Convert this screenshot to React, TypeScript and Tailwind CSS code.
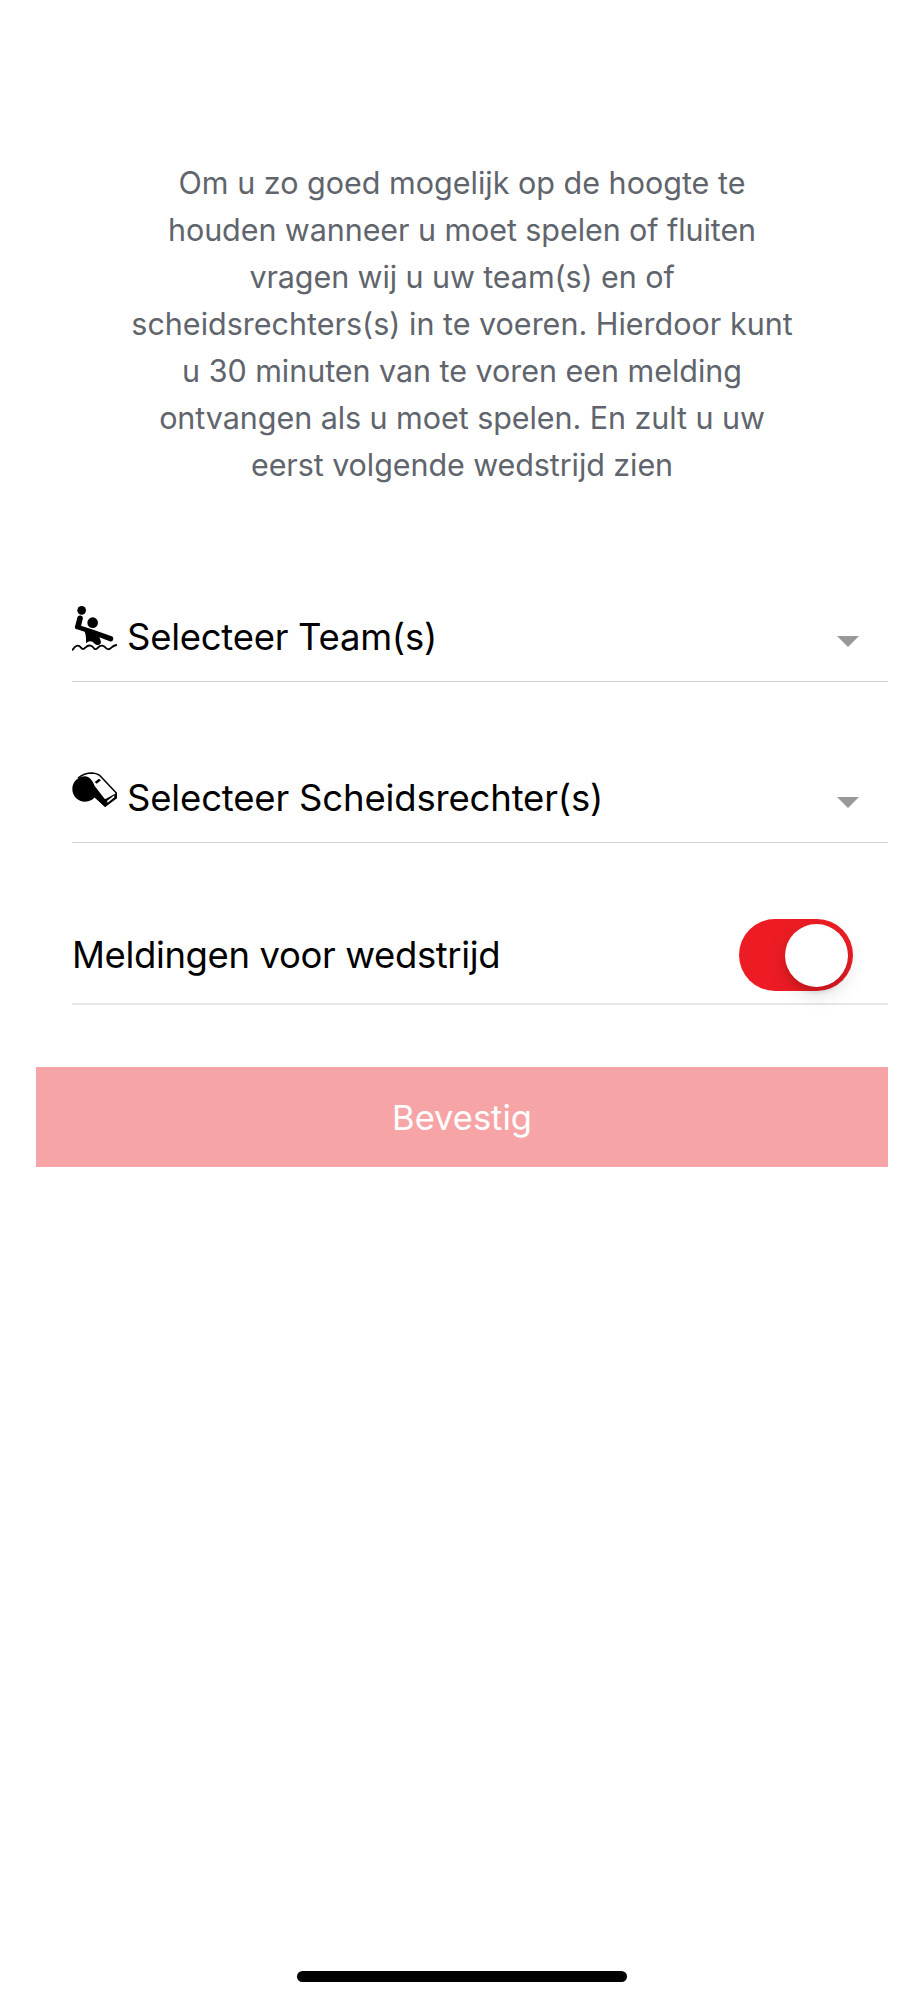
import { useState } from 'react'
import type { ReactNode } from 'react'

// ── Icons ─────────────────────────────────────────────────────────────────────

function WaterPoloIcon() {
  return (
    <svg viewBox="0 0 135 135" className="h-[45px] w-[45px]" fill="black">
      <circle cx="29" cy="13" r="13" />
      <circle cx="62" cy="50" r="16" />
      <path d="M24 37 18 61" stroke="black" strokeWidth="17" strokeLinecap="round" />
      <path d="M9 59 Q7 68 15 70 L38 77 Q43 88 42 112 Q48 106 55 106 Q62 106 68 113 Q74 119 82 116 Q89 112 86 104 Q84 98 82 94 L113 106 Q120 108 123 102 Q126 94 119 91 L64 71 L27 59Z" />
      <path
        d="M2 131 Q9 120 16 119 Q22 118 27 125 Q33 133 40 125 Q48 117 56 119 Q61 120 66 127 Q71 133 78 125 Q84 118 91 119 Q97 120 103 127 Q110 133 118 125 Q124 119 133 117"
        fill="none"
        stroke="black"
        strokeWidth="5.5"
        strokeLinecap="round"
      />
    </svg>
  )
}

function WhistleIcon() {
  return (
    <svg viewBox="0 0 135 108" className="h-[36px] w-[45px]" fill="black">
      <path
        d="M18 18 Q36 3 60 3 Q78 4 87 14 L133 63 L132 76 L100 102 L66 72"
        fill="white"
        stroke="black"
        strokeWidth="4.5"
        strokeLinejoin="round"
      />
      <path d="M39 13 C18 13 1 30 1 51 C1 73 18 89 39 89 C53 89 63 83 68 76 L99 105 L135 79 L135 62 L99 82 L68 42 C61 23 51 14 39 13Z" />
      <path d="M68 30 81 20 87 25 74 35Z" />
      <path d="M105 87 127 70 127 76 107 92Z" fill="white" />
    </svg>
  )
}

// ── Rows ──────────────────────────────────────────────────────────────────────

interface SelectRowProps {
  icon: ReactNode
  label: string
  labelClassName: string
}

function SelectRow({ icon, label, labelClassName }: SelectRowProps) {
  return (
    <button
      type="button"
      className="flex h-[161px] w-full items-end border-b border-[#d2d2d2] text-left"
    >
      <span className="mb-[30px] flex h-[45px] w-[55px] shrink-0 items-end">{icon}</span>
      <span className={`mb-[20px] grow text-[36.5px] leading-[48px] whitespace-nowrap ${labelClassName}`}>
        {label}
      </span>
      <svg viewBox="0 0 22 11" className="mr-[29px] mb-[34px] h-[11px] w-[22px]" fill="#999999">
        <path d="M0 0h22L11 11z" />
      </svg>
    </button>
  )
}

interface ToggleProps {
  checked: boolean
  onChange: (checked: boolean) => void
}

function Toggle({ checked, onChange }: ToggleProps) {
  return (
    <button
      type="button"
      role="switch"
      aria-checked={checked}
      onClick={() => onChange(!checked)}
      className={`flex h-[72px] w-[114px] items-center rounded-full px-[4.5px] ${
        checked ? 'justify-end bg-[#ed1c24]' : 'justify-start bg-[#e5e5ea]'
      }`}
    >
      <span className="size-[63px] rounded-full bg-white shadow-[0_7px_19px_rgba(0,0,0,0.15),0_7px_3px_rgba(0,0,0,0.06)]" />
    </button>
  )
}

// ── Page ──────────────────────────────────────────────────────────────────────

const INTRO_LINES = [
  { text: 'Om u zo goed mogelijk op de hoogte te', className: 'tracking-normal' },
  { text: 'houden wanneer u moet spelen of fluiten', className: 'tracking-[-0.08px]' },
  { text: 'vragen wij u uw team(s) en of', className: 'tracking-[-0.09px]' },
  { text: 'scheidsrechters(s) in te voeren. Hierdoor kunt', className: 'tracking-normal' },
  { text: 'u 30 minuten van te voren een melding', className: 'tracking-[-0.04px]' },
  { text: 'ontvangen als u moet spelen. En zult u uw', className: 'tracking-[-0.06px]' },
  { text: 'eerst volgende wedstrijd zien', className: 'tracking-[-0.08px]' },
]

export default function App() {
  const [notify, setNotify] = useState(true)

  return (
    <main className="flex h-[2000px] w-[924px] flex-col bg-white font-['Inter',sans-serif] text-black">
      <p className="mt-[159px] text-center text-[30.5px] leading-[47px] text-[#60646c]">
        {INTRO_LINES.map((line) => (
          <span key={line.text} className={`block whitespace-nowrap ${line.className}`}>
            {line.text}
          </span>
        ))}
      </p>

      <section className="mt-[33px] mr-[36px] ml-[72px]">
        <SelectRow icon={<WaterPoloIcon />} label="Selecteer Team(s)" labelClassName="tracking-[-0.27px]" />
        <SelectRow
          icon={
            <span className="mb-[4px]">
              <WhistleIcon />
            </span>
          }
          label="Selecteer Scheidsrechter(s)"
          labelClassName="tracking-[-0.17px]"
        />
        <div className="flex h-[162px] items-end justify-between border-b-2 border-[#e6e6e6]">
          <span className="mb-[24px] text-[36.5px] leading-[48px] tracking-[-0.38px] whitespace-nowrap">
            Meldingen voor wedstrijd
          </span>
          <div className="mr-[35.5px] mb-[12px] flex">
            <Toggle checked={notify} onChange={setNotify} />
          </div>
        </div>
      </section>

      <button
        type="button"
        className="mx-[36px] mt-[62px] flex h-[99.5px] items-center justify-center bg-[#f7a4a7] pt-[2px] text-[34.5px] text-white"
      >
        Bevestig
      </button>

      <div className="mx-auto mt-auto mb-[18px] h-[11px] w-[330px] rounded-full bg-black" />
    </main>
  )
}
